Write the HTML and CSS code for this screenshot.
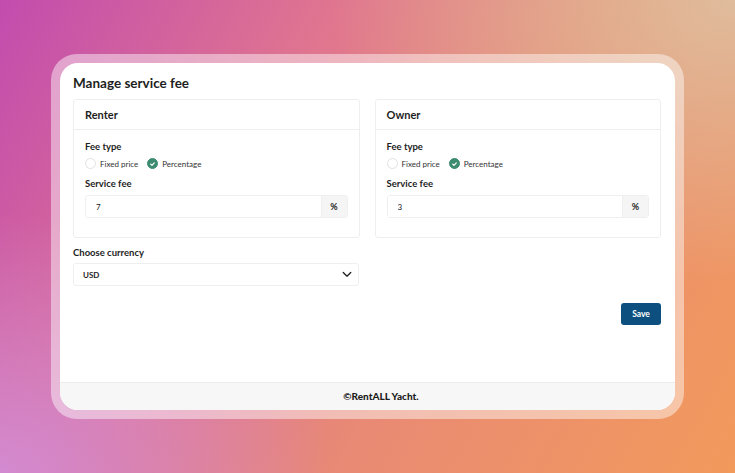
FILE: index.html
```html
<!DOCTYPE html>
<html lang="en">
<head>
  <meta charset="UTF-8" />
  <meta name="viewport" content="width=device-width, initial-scale=1.0"/>
  <title>Manage service fee</title>
  <link rel="stylesheet" href="styles.css">
</head>
<body>
  <div class="frame">
    <div class="panel">
      <main class="content">
        <h1>Manage service fee</h1>

        <div class="cards">
          <section class="fee-card">
            <div class="fee-card-head">Renter</div>
            <div class="fee-card-body">
              <div class="label">Fee type</div>
              <div class="radios">
                <span class="radio"><span class="dot"></span>Fixed price</span>
                <span class="radio checked">
                  <span class="dot"><svg viewBox="0 0 10 10" width="10" height="10"><path d="M3 5.2 L4.4 6.5 L7 3.7" fill="none" stroke="#fff" stroke-width="1.3" stroke-linecap="round" stroke-linejoin="round"/></svg></span>Percentage
                </span>
              </div>
              <div class="label">Service fee</div>
              <div class="input-group">
                <input type="text" value="7" />
                <span class="addon">%</span>
              </div>
            </div>
          </section>

          <section class="fee-card">
            <div class="fee-card-head">Owner</div>
            <div class="fee-card-body">
              <div class="label">Fee type</div>
              <div class="radios">
                <span class="radio"><span class="dot"></span>Fixed price</span>
                <span class="radio checked">
                  <span class="dot"><svg viewBox="0 0 10 10" width="10" height="10"><path d="M3 5.2 L4.4 6.5 L7 3.7" fill="none" stroke="#fff" stroke-width="1.3" stroke-linecap="round" stroke-linejoin="round"/></svg></span>Percentage
                </span>
              </div>
              <div class="label">Service fee</div>
              <div class="input-group">
                <input type="text" value="3" />
                <span class="addon">%</span>
              </div>
            </div>
          </section>
        </div>

        <div class="currency">
          <div class="label">Choose currency</div>
          <div class="select">
            <span>USD</span>
            <svg viewBox="0 0 12 8" width="10" height="7"><path d="M1.5 1.5 L6 6 L10.5 1.5" fill="none" stroke="#222" stroke-width="1.6" stroke-linecap="round" stroke-linejoin="round"/></svg>
          </div>
        </div>

        <div class="actions">
          <button>Save</button>
        </div>
      </main>

      <footer>&copy;RentALL Yacht.</footer>
    </div>
  </div>
</body>
</html>
```

FILE: styles.css
```css
html, body {
  height: 100%;
}
body {
  margin: 0;
  font-family: Lato, "Open Sans", sans-serif;
  color: #1e1e1e;
  display: flex;
  align-items: center;
  justify-content: center;
  background:
    radial-gradient(ellipse 55% 60% at 100% 0%, #dfbc9c 0%, rgba(223,188,156,0) 100%),
    radial-gradient(ellipse 45% 55% at 0% 100%, #d38ad0 0%, rgba(211,138,208,0) 100%),
    linear-gradient(118deg, #c24cae 0%, #e0768f 35%, #e88a74 60%, #f29a5c 100%);
}
.frame {
  width: 615px;
  height: 347px;
  padding: 9px;
  border-radius: 26px;
  background: rgba(255, 255, 255, 0.45);
}
.panel {
  height: 100%;
  background: #fff;
  border-radius: 18px;
  overflow: hidden;
  display: flex;
  flex-direction: column;
}
.content {
  flex: 1;
  padding: 12px 14px 0 13px;
}
h1 {
  margin: 0 0 8px;
  font-size: 13.5px;
  font-weight: 700;
  line-height: 16px;
}
.cards {
  display: flex;
  gap: 15px;
}
.fee-card {
  flex: 1;
  border: 1px solid #eeeeee;
  border-radius: 3px;
  height: 137px;
}
.fee-card-head {
  height: 29px;
  line-height: 29px;
  padding: 0 11px;
  border-bottom: 1px solid #eeeeee;
  font-size: 11px;
  font-weight: 700;
}
.fee-card-body {
  padding: 11px 11px 0;
}
.label {
  font-size: 9.5px;
  font-weight: 700;
  line-height: 12px;
}
.radios {
  display: flex;
  gap: 9px;
  margin: 5px 0 9px;
  font-size: 8px;
  color: #333;
}
.radio {
  display: flex;
  align-items: center;
  gap: 4px;
}
.dot {
  width: 9px;
  height: 9px;
  border: 1px solid #e2e2e2;
  border-radius: 50%;
  display: flex;
  align-items: center;
  justify-content: center;
}
.radio.checked .dot {
  background: #3d8c72;
  border-color: #3d8c72;
}
.input-group {
  display: flex;
  margin-top: 5px;
  height: 21px;
  border: 1px solid #efefef;
  border-radius: 3px;
  overflow: hidden;
}
.input-group input {
  flex: 1;
  border: none;
  outline: none;
  padding: 0 10px;
  font-family: inherit;
  font-size: 8px;
  color: #222;
}
.addon {
  width: 25px;
  background: #f5f5f5;
  border-left: 1px solid #efefef;
  display: flex;
  align-items: center;
  justify-content: center;
  font-size: 9px;
  font-weight: 700;
}
.currency {
  width: 286px;
  margin-top: 9px;
}
.select {
  margin-top: 4px;
  height: 21px;
  border: 1px solid #efefef;
  border-radius: 3px;
  display: flex;
  align-items: center;
  justify-content: space-between;
  padding: 0 6px 0 9px;
  font-size: 8px;
  font-weight: 700;
}
.actions {
  display: flex;
  justify-content: flex-end;
  margin-top: 17px;
}
button {
  width: 40px;
  height: 22px;
  border: none;
  border-radius: 3px;
  background: #0d4f7e;
  color: #fff;
  font-family: inherit;
  font-size: 8.5px;
  font-weight: 700;
}
footer {
  height: 27px;
  line-height: 27px;
  padding-left: 27px;
  background: #f7f7f7;
  border-top: 1px solid #ececec;
  text-align: center;
  font-size: 10px;
  font-weight: 900;
}
```
